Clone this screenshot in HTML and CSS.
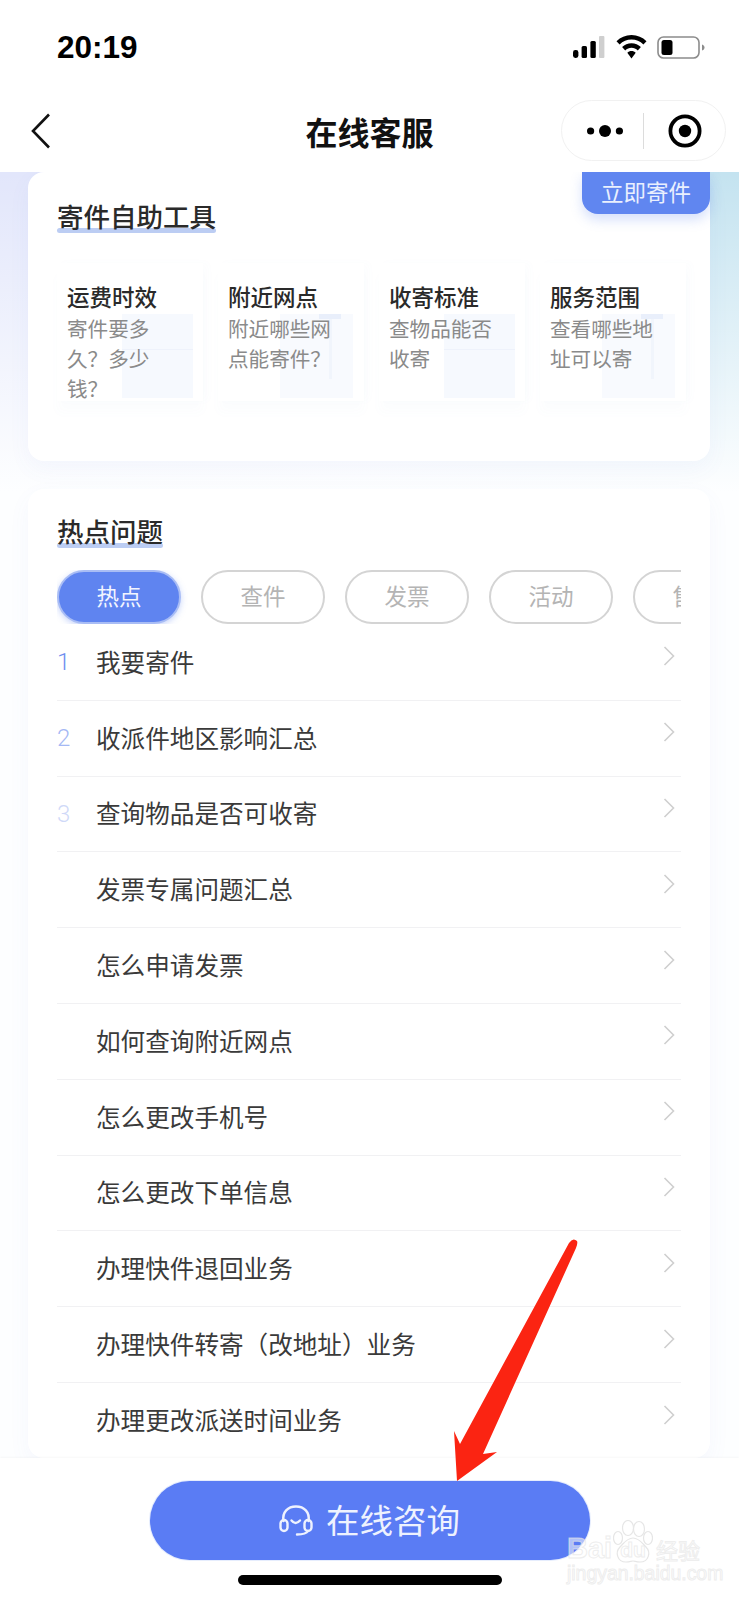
FILE: index.html
```html
<!DOCTYPE html>
<html lang="zh-CN">
<head>
<meta charset="utf-8">
<title>在线客服</title>
<link rel="stylesheet" href="styles.css">
</head>
<body>
<svg class="defs" width="0" height="0" aria-hidden="true">
  <symbol id="chev" viewBox="0 0 12 20"><path d="M1.5 1 L10.5 10 L1.5 19" fill="none" stroke="#cfcfcf" stroke-width="1.6"/></symbol>
</svg>
<div class="phone">
  <header class="status">
    <span class="time">20:19</span>
    <div class="status-icons">
      <svg class="signal" width="32" height="22" viewBox="0 0 32 22">
        <rect x="0" y="14" width="5.4" height="8" rx="2.4" fill="#000"/>
        <rect x="8.6" y="10" width="5.4" height="12" rx="1.5" fill="#000"/>
        <rect x="17.4" y="5" width="5.4" height="17" rx="1.5" fill="#000"/>
        <rect x="26" y="0" width="5.4" height="22" rx="1" fill="#cfcfcf"/>
      </svg>
      <svg class="wifi" width="31" height="24" viewBox="0 0 31 24">
        <path d="M15.5 0 C9.5 0 4.5 2.3 0.5 6.2 L3.6 9.6 C6.8 6.4 11 4.6 15.5 4.6 C20 4.6 24.2 6.4 27.4 9.6 L30.5 6.2 C26.5 2.3 21.5 0 15.5 0 Z" fill="#000"/>
        <path d="M15.5 8.2 C11.8 8.2 8.6 9.6 6.1 12.1 L9.2 15.4 C10.9 13.8 13.1 12.8 15.5 12.8 C17.9 12.8 20.1 13.8 21.8 15.4 L24.9 12.1 C22.4 9.6 19.2 8.2 15.5 8.2 Z" fill="#000"/>
        <path d="M15.5 16 C13.8 16 12.4 16.6 11.3 17.7 L15.5 23.6 L19.7 17.7 C18.6 16.6 17.2 16 15.5 16 Z" fill="#000"/>
      </svg>
      <svg class="battery" width="48" height="23" viewBox="0 0 48 23">
        <rect x="1" y="1" width="41" height="21" rx="5.5" fill="none" stroke="#8c8c8c" stroke-width="1.6"/>
        <rect x="4.5" y="4" width="11" height="15" rx="2.5" fill="#000"/>
        <path d="M45 8.5 C46.6 9 47.5 10 47.5 11.5 C47.5 13 46.6 14 45 14.5 Z" fill="#8c8c8c"/>
      </svg>
    </div>
  </header>

  <nav class="nav">
    <svg class="back" width="20" height="36" viewBox="0 0 20 36"><path d="M18 1.5 L2 18 L18 34.5" fill="none" stroke="#111" stroke-width="2.6"/></svg>
    <h1 class="nav-title">在线客服</h1>
    <div class="capsule">
      <svg class="more" width="36" height="14" viewBox="0 0 36 14">
        <circle cx="3.6" cy="7" r="3.6" fill="#000"/><circle cx="18" cy="7" r="6" fill="#000"/><circle cx="32.4" cy="7" r="3.6" fill="#000"/>
      </svg>
      <span class="cap-divider"></span>
      <svg class="target" width="34" height="34" viewBox="0 0 34 34">
        <circle cx="17" cy="17" r="14.6" fill="none" stroke="#000" stroke-width="3.8"/><circle cx="17" cy="17" r="6.2" fill="#000"/>
      </svg>
    </div>
  </nav>

  <main class="content">
    <section class="card card-tools">
      <span class="send-btn">立即寄件</span>
      <h2 class="section-title">寄件自助工具</h2>
      <div class="tools">
        <div class="tool">
          <span class="deco deco-box"></span>
          <h3 class="tool-name">运费时效</h3>
          <p class="tool-desc">寄件要多久？多少钱？</p>
        </div>
        <div class="tool">
          <span class="deco deco-pin"></span>
          <h3 class="tool-name">附近网点</h3>
          <p class="tool-desc">附近哪些网点能寄件？</p>
        </div>
        <div class="tool">
          <span class="deco deco-box"></span>
          <h3 class="tool-name">收寄标准</h3>
          <p class="tool-desc">查物品能否收寄</p>
        </div>
        <div class="tool">
          <span class="deco deco-pin"></span>
          <h3 class="tool-name">服务范围</h3>
          <p class="tool-desc">查看哪些地址可以寄</p>
        </div>
      </div>
    </section>

    <section class="card card-hot">
      <h2 class="section-title">热点问题</h2>
      <div class="tabs">
        <span class="tab tab-active">热点</span>
        <span class="tab">查件</span>
        <span class="tab">发票</span>
        <span class="tab">活动</span>
        <span class="tab">售后</span>
      </div>
      <ul class="faq">
        <li class="row"><span class="num num-1">1</span><span class="q">我要寄件</span><svg class="chev"><use href="#chev"/></svg></li>
        <li class="row"><span class="num num-2">2</span><span class="q">收派件地区影响汇总</span><svg class="chev"><use href="#chev"/></svg></li>
        <li class="row"><span class="num num-3">3</span><span class="q">查询物品是否可收寄</span><svg class="chev"><use href="#chev"/></svg></li>
        <li class="row"><span class="num"></span><span class="q">发票专属问题汇总</span><svg class="chev"><use href="#chev"/></svg></li>
        <li class="row"><span class="num"></span><span class="q">怎么申请发票</span><svg class="chev"><use href="#chev"/></svg></li>
        <li class="row"><span class="num"></span><span class="q">如何查询附近网点</span><svg class="chev"><use href="#chev"/></svg></li>
        <li class="row"><span class="num"></span><span class="q">怎么更改手机号</span><svg class="chev"><use href="#chev"/></svg></li>
        <li class="row"><span class="num"></span><span class="q">怎么更改下单信息</span><svg class="chev"><use href="#chev"/></svg></li>
        <li class="row"><span class="num"></span><span class="q">办理快件退回业务</span><svg class="chev"><use href="#chev"/></svg></li>
        <li class="row"><span class="num"></span><span class="q">办理快件转寄（改地址）业务</span><svg class="chev"><use href="#chev"/></svg></li>
        <li class="row"><span class="num"></span><span class="q">办理更改派送时间业务</span><svg class="chev"><use href="#chev"/></svg></li>
      </ul>
    </section>
  </main>

  <footer class="bottom">
    <button class="consult" type="button">
      <svg class="headset" width="34" height="31" viewBox="0 0 34 31" fill="none" stroke="#eef2fe" stroke-width="2.4" stroke-linecap="round">
        <path d="M4.5 16 C3 7 9 1.5 17 1.5 C25 1.5 31 7 29.5 16"/>
        <rect x="1.5" y="15" width="7" height="11" rx="3.5"/>
        <rect x="25.5" y="15" width="7" height="11" rx="3.5"/>
        <path d="M12.5 15.5 Q16.5 20.5 21 15.5"/>
        <path d="M29 26 Q27 29.5 18 29.5"/>
      </svg>
      <span class="consult-label">在线咨询</span>
    </button>
    <span class="home"></span>
  </footer>

  <svg class="arrow" width="739" height="1600" viewBox="0 0 739 1600" aria-hidden="true">
    <path d="M569 1243 Q573 1237 577 1241 Q578 1243 576 1248 L483 1454 L497 1452 L457 1481 L454 1431 L460 1444 Z" fill="#fb2412"/>
  </svg>

  <div class="watermark">
    <div class="wm-top">
      <span class="wm-bai">Bai</span>
      <span class="wm-paw">
        <svg class="paw" width="40" height="43" viewBox="0 0 40 43" fill="#fff" stroke="#e6e6e6" stroke-width="1.2">
          <ellipse cx="5" cy="18" rx="4.5" ry="6.5"/>
          <ellipse cx="15" cy="8" rx="5.5" ry="7.5"/>
          <ellipse cx="26" cy="9" rx="5.5" ry="7.5"/>
          <ellipse cx="35" cy="18" rx="4.5" ry="6.5"/>
          <path d="M20 18 C14 18 11 23 7 27 C2 32 4 42 13 42 C17 42 18 41 20 41 C22 41 23 42 27 42 C36 42 38 32 33 27 C29 23 26 18 20 18 Z"/>
        </svg>
        <span class="wm-du">du</span>
      </span>
      <span class="wm-jy">经验</span>
    </div>
    <div class="wm-url">jingyan.baidu.com</div>
  </div>
</div>
</body>
</html>
```

FILE: styles.css
```css
* { box-sizing: border-box; }
html, body { margin: 0; padding: 0; background: #fff; }
body { font-family: "Noto Sans CJK SC", "Liberation Sans", sans-serif; color: #333; }
h1, h2, h3, p, ul { margin: 0; padding: 0; }
ul { list-style: none; }
.defs { position: absolute; }

.phone {
  position: relative;
  width: 739px;
  height: 1600px;
  overflow: hidden;
  display: flex;
  flex-direction: column;
}

/* status bar */
.status {
  height: 100px;
  flex: none;
  display: flex;
  align-items: flex-start;
  justify-content: space-between;
  padding: 29px 34px 0 57px;
}
.time {
  font-family: "Liberation Sans", sans-serif;
  font-weight: 700;
  font-size: 31.5px;
  line-height: 36px;
  color: #000;
}
.status-icons { display: flex; align-items: flex-start; padding-top: 6px; }
.signal { margin-top: 1px; margin-right: 11px; }
.wifi { margin-right: 10px; }
.battery { margin-top: 1px; }

/* nav bar */
.nav {
  height: 72px;
  flex: none;
  display: grid;
  grid-template-columns: 1fr auto 1fr;
  align-items: start;
  padding: 0 13px 0 31px;
  background: #fff;
}
.back { margin-top: 13px; }
.nav-title {
  font-size: 32px;
  line-height: 62px;
  font-weight: 700;
  color: #111;
  margin-left: -18px;
}
.capsule {
  justify-self: end;
  width: 165px;
  height: 61px;
  border: 1px solid #f1f1f1;
  border-radius: 31px;
  display: flex;
  align-items: center;
  padding-left: 25px;
}
.more { flex: none; }
.cap-divider { width: 1px; height: 36px; background: #dcdcdc; margin-left: 20px; margin-right: 24px; }
.target { flex: none; }

/* content */
.content {
  height: 1286px;
  flex: none;
  overflow: hidden;
  padding: 0 29px 0 28px;
  background:
    linear-gradient(180deg, rgba(255,255,255,0) 0, #fdfeff 320px),
    linear-gradient(90deg, #e2e6fb 0, #e2e6fb 5%, #e8ecfc 50%, #c4e3f0 95%);
}
.card {
  position: relative;
  background: #fff;
  border-radius: 16px;
  padding: 29px 29px 0;
  box-shadow: 0 8px 22px rgba(90, 120, 220, 0.05);
}
.card-tools { height: 289px; }
.card-hot { height: 969px; margin-top: 28px; padding-top: 27px; }

.section-title {
  display: inline-block;
  font-size: 26.5px;
  line-height: 30px;
  font-weight: 500;
  color: #2a2a2a;
}
.section-title::after {
  content: "";
  display: block;
  height: 5px;
  margin-top: -3px;
  border-radius: 3px;
  background: #bccdf3;
}

.send-btn {
  position: absolute;
  top: 0;
  right: 0;
  width: 128px;
  height: 42px;
  background: #6086f0;
  color: #eaf0fe;
  font-size: 22.5px;
  line-height: 38px;
  text-align: center;
  border-radius: 0 0 16px 16px;
  box-shadow: 0 6px 12px rgba(96, 134, 240, 0.25);
}

.tools {
  display: grid;
  grid-template-columns: repeat(4, 146px);
  column-gap: 15px;
  margin-top: 30px;
}
.tool {
  position: relative;
  height: 138px;
  padding: 18px 10px 0;
  background: #fff;
  box-shadow: 0 12px 10px rgba(120, 140, 210, 0.018), 5px 0 8px rgba(120, 140, 210, 0.018);
}
.deco { position: absolute; top: 51px; height: 84px; background: #f6f9fe; }
.deco-box { left: 65px; width: 71px; }
.deco-pin { left: 62px; width: 73px; background: #f8fafe; }
.deco-pin::before {
  content: "";
  position: absolute;
  top: 0;
  right: 12px;
  width: 22px;
  height: 5px;
  background: #e9effb;
}
.deco-pin::after {
  content: "";
  position: absolute;
  top: 5px;
  right: 21px;
  width: 3px;
  height: 60px;
  background: #f1f5fc;
}
.deco-box::before {
  content: "";
  position: absolute;
  top: 35px;
  left: 0;
  right: 0;
  height: 1px;
  background: #eef2fb;
}
.tool-name {
  position: relative;
  font-size: 22.5px;
  line-height: 30px;
  font-weight: 500;
  color: #2a2a2a;
}
.tool-desc {
  position: relative;
  width: 106px;
  margin-top: 3px;
  font-size: 20.6px;
  line-height: 29.8px;
  color: #8a8a8a;
}

/* tabs */
.tabs {
  display: flex;
  gap: 20px;
  margin-top: 22px;
  height: 54px;
  width: 624px;
  overflow: hidden;
}
.tab {
  flex: none;
  width: 124px;
  height: 54px;
  border: 2px solid #d4d4d4;
  border-radius: 27px;
  font-size: 22.5px;
  line-height: 47px;
  text-align: center;
  color: #b4b4b4;
}
.tab-active {
  background: #5f84f0;
  border-color: #a9bdf5;
  color: #f2f5ff;
  box-shadow: 0 2px 6px rgba(96, 134, 240, 0.35);
}

/* faq rows */
.faq { width: 624px; margin-top: 1px; }
.row {
  height: 75.8px;
  display: flex;
  align-items: center;
  border-bottom: 1px solid #f1f1f3;
}
.row:last-child { border-bottom: 0; }
.num {
  flex: none;
  width: 39px;
  font-family: "Roboto", "Liberation Sans", sans-serif;
  font-weight: 300;
  font-size: 24px;
  line-height: 36px;
}
.num-1 { color: #6f8fef; }
.num-2 { color: #a4b8f4; }
.num-3 { color: #cfd9f8; }
.q {
  flex: 1;
  font-size: 24.6px;
  line-height: 36px;
  padding-bottom: 3px;
  color: #3a3a3a;
}
.chev {
  flex: none;
  width: 12px;
  height: 20px;
  margin-right: 6px;
  margin-bottom: 12px;
}

/* footer */
.bottom {
  flex: 1;
  background: #fff;
  display: flex;
  flex-direction: column;
  align-items: center;
  padding-top: 23px;
  box-shadow: 0 -1px 2px rgba(0, 0, 0, 0.03);
  position: relative;
}
.consult {
  width: 440px;
  height: 79px;
  border: 0;
  padding: 0;
  border-radius: 40px;
  background: #5a7cf4;
  color: #eef2fe;
  display: flex;
  align-items: center;
  justify-content: center;
  gap: 13px;
  font-family: inherit;
  font-size: 33.5px;
  box-shadow: 0 0 0 1px #e6edfd;
}
.consult-label { line-height: 45px; padding-bottom: 4px; }
.headset { flex: none; margin-bottom: 1px; }
.home {
  width: 264px;
  height: 10px;
  margin-top: 15px;
  border-radius: 5px;
  background: #000;
}

/* annotation overlay */
.arrow { position: absolute; left: 0; top: 0; pointer-events: none; }

/* watermark */
.watermark {
  position: absolute;
  left: 567px;
  top: 1520px;
  width: 134px;
  font-family: "Liberation Sans", sans-serif;
  color: rgba(255, 255, 255, 0.55);
  -webkit-text-stroke: 1px rgba(228, 228, 228, 0.65);
}
.wm-top { display: flex; align-items: flex-end; height: 43px; }
.wm-bai { font-size: 29px; line-height: 29px; font-weight: 700; width: 46px; flex: none; }
.wm-paw { position: relative; flex: none; width: 40px; height: 43px; display: flex; align-items: flex-end; justify-content: center; }
.paw { position: absolute; left: 0; top: 0; }
.wm-du { position: relative; font-size: 21px; line-height: 26px; font-weight: 700; }
.wm-jy { font-family: "Noto Sans CJK SC", sans-serif; font-size: 22px; line-height: 28px; margin-left: 3px; flex: none; }
.wm-url { font-size: 19.4px; line-height: 22px; margin-top: -1px; white-space: nowrap; }
```
